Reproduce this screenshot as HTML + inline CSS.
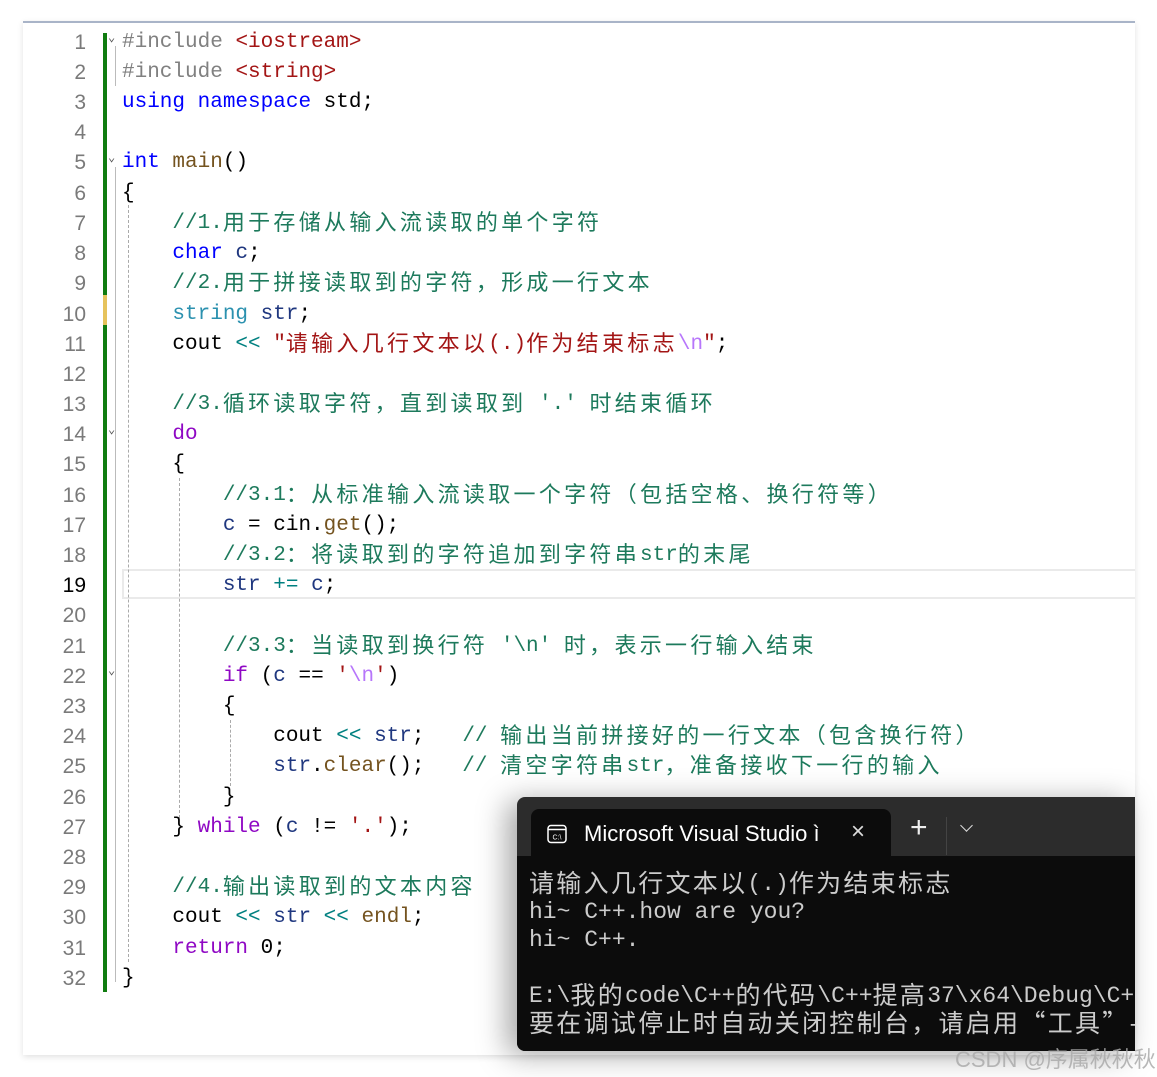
<!DOCTYPE html>
<html><head><meta charset="utf-8"><style>
*{margin:0;padding:0;box-sizing:border-box}
body{width:1157px;height:1077px;background:#fff;position:relative;overflow:hidden;font-family:"Liberation Mono","Noto Sans CJK SC",monospace}
#ed{position:absolute;left:23px;top:21px;width:1112px;height:1034px;background:#fff;border-top:2px solid #a9b4c8;box-shadow:0 2px 6px rgba(0,0,0,.12)}
.ln{position:absolute;left:40px;width:46px;text-align:right;font-family:"Liberation Sans",sans-serif;font-size:21px;color:#7a7a7a;height:30px;line-height:30px}
.cl{position:absolute;left:122px;white-space:pre;font-size:21px;line-height:30px;height:30px;color:#000}
.c{font-family:"Noto Sans CJK SC",sans-serif;font-size:22px;letter-spacing:3.3px;line-height:0;position:relative;top:2px}
.k{color:#0000ff}.p{color:#808080}.s{color:#a31515}.f{color:#74531f}.v{color:#1f377f}.t{color:#2b91af}.o{color:#008080}.m{color:#8f08c4}.e{color:#b776fb}.g{color:#1d7a5c}
.gl{position:absolute;border-left:1px dashed #aaa;width:0}
#bar{position:absolute;left:103px;top:33px;width:4px;height:959px;background:#107c10}
#term{position:absolute;left:517px;top:797px;width:618px;height:254px;background:#2c2c2c;border-radius:8px 0 0 8px;box-shadow:-10px 4px 30px rgba(0,0,0,.35);overflow:hidden}
#tab{position:absolute;left:14px;top:12px;width:360px;height:50px;background:#0c0c0c;border-radius:8px 8px 0 0;color:#fff;font-family:"Liberation Sans",sans-serif;font-size:22px}
#tb{position:absolute;left:0;top:59px;width:618px;height:200px;background:#0c0c0c;color:#cccccc;font-size:23px;line-height:28px;padding:14px 0 0 12px;white-space:pre}
#tb .c{font-size:25px;letter-spacing:2.3px;line-height:0;top:2px}
</style></head><body>
<div id="ed"></div>
<div id="bar"></div>
<div style="position:absolute;left:103px;top:295px;width:4px;height:30px;background:#e6c35c"></div>
<div style="position:absolute;left:122px;top:569px;width:1013px;height:30px;border:2px solid #eaeaea;border-right:none"></div>
<div class="gl" style="left:115px;top:46px;height:40px;border-left:1px solid #bbb"></div>
<div class="gl" style="left:115px;top:167px;height:815px;border-left:1px solid #bbb"></div>
<div class="gl" style="left:128px;top:205px;height:757px"></div>
<div class="gl" style="left:179px;top:478px;height:340px"></div>
<div class="gl" style="left:230px;top:720px;height:66px"></div>
<div style="position:absolute;left:108px;top:30px;font-size:12px;color:#555">&#8964;</div>
<div style="position:absolute;left:108px;top:150px;font-size:12px;color:#555">&#8964;</div>
<div style="position:absolute;left:108px;top:422px;font-size:12px;color:#555">&#8964;</div>
<div style="position:absolute;left:108px;top:663px;font-size:12px;color:#555">&#8964;</div>

<div style="position:absolute;left:0;top:2px;width:1157px;height:1000px">
<div class="ln" style="top:26px">1</div><div class="ln" style="top:56px">2</div><div class="ln" style="top:86px">3</div><div class="ln" style="top:116px">4</div><div class="ln" style="top:146px">5</div><div class="ln" style="top:177px">6</div><div class="ln" style="top:207px">7</div><div class="ln" style="top:237px">8</div><div class="ln" style="top:267px">9</div><div class="ln" style="top:298px">10</div><div class="ln" style="top:328px">11</div><div class="ln" style="top:358px">12</div><div class="ln" style="top:388px">13</div><div class="ln" style="top:418px">14</div><div class="ln" style="top:448px">15</div><div class="ln" style="top:479px">16</div><div class="ln" style="top:509px">17</div><div class="ln" style="top:539px">18</div><div class="ln" style="top:569px;color:#000">19</div><div class="ln" style="top:599px">20</div><div class="ln" style="top:630px">21</div><div class="ln" style="top:660px">22</div><div class="ln" style="top:690px">23</div><div class="ln" style="top:720px">24</div><div class="ln" style="top:750px">25</div><div class="ln" style="top:781px">26</div><div class="ln" style="top:811px">27</div><div class="ln" style="top:841px">28</div><div class="ln" style="top:871px">29</div><div class="ln" style="top:901px">30</div><div class="ln" style="top:932px">31</div><div class="ln" style="top:962px">32</div>

<div class="cl" style="top:26px"><span class="p">#include</span> <span class="s">&lt;iostream&gt;</span></div>
<div class="cl" style="top:56px"><span class="p">#include</span> <span class="s">&lt;string&gt;</span></div>
<div class="cl" style="top:86px"><span class="k">using</span> <span class="k">namespace</span> std;</div>
<div class="cl" style="top:146px"><span class="k">int</span> <span class="f">main</span>()</div>
<div class="cl" style="top:177px">{</div>
<div class="cl g" style="top:207px">    //1.<span class="c">用于存储从输入流读取的单个字符</span></div>
<div class="cl" style="top:237px">    <span class="k">char</span> <span class="v">c</span>;</div>
<div class="cl g" style="top:267px">    //2.<span class="c">用于拼接读取到的字符，形成一行文本</span></div>
<div class="cl" style="top:298px">    <span class="t">string</span> <span class="v">str</span>;</div>
<div class="cl" style="top:328px">    cout <span class="o">&lt;&lt;</span> <span class="s">"<span class="c">请输入几行文本以</span>(.)<span class="c">作为结束标志</span></span><span class="e">\n</span><span class="s">"</span>;</div>
<div class="cl g" style="top:388px">    //3.<span class="c">循环读取字符，直到读取到</span> '.' <span class="c">时结束循环</span></div>
<div class="cl m" style="top:418px">    do</div>
<div class="cl" style="top:448px">    {</div>
<div class="cl g" style="top:479px">        //3.1<span class="c">：从标准输入流读取一个字符（包括空格、换行符等）</span></div>
<div class="cl" style="top:509px">        <span class="v">c</span> = cin.<span class="f">get</span>();</div>
<div class="cl g" style="top:539px">        //3.2<span class="c">：将读取到的字符追加到字符串</span>str<span class="c">的末尾</span></div>
<div class="cl" style="top:569px">        <span class="v">str</span> <span class="o">+=</span> <span class="v">c</span>;</div>
<div class="cl g" style="top:630px">        //3.3<span class="c">：当读取到换行符</span> '\n' <span class="c">时，表示一行输入结束</span></div>
<div class="cl" style="top:660px">        <span class="m">if</span> (<span class="v">c</span> == <span class="s">'</span><span class="e">\n</span><span class="s">'</span>)</div>
<div class="cl" style="top:690px">        {</div>
<div class="cl" style="top:720px">            cout <span class="o">&lt;&lt;</span> <span class="v">str</span>;   <span class="g">// <span class="c">输出当前拼接好的一行文本（包含换行符）</span></span></div>
<div class="cl" style="top:750px">            <span class="v">str</span>.<span class="f">clear</span>();   <span class="g">// <span class="c">清空字符串</span>str<span class="c">，准备接收下一行的输入</span></span></div>
<div class="cl" style="top:781px">        }</div>
<div class="cl" style="top:811px">    } <span class="m">while</span> (<span class="v">c</span> != <span class="s">'.'</span>);</div>
<div class="cl g" style="top:871px">    //4.<span class="c">输出读取到的文本内容</span></div>
<div class="cl" style="top:901px">    cout <span class="o">&lt;&lt;</span> <span class="v">str</span> <span class="o">&lt;&lt;</span> <span class="f">endl</span>;</div>
<div class="cl" style="top:932px">    <span class="m">return</span> 0;</div>
<div class="cl" style="top:962px">}</div>
</div>

<div id="term">
<div id="tab">
<svg style="position:absolute;left:16px;top:15px" width="20" height="20" viewBox="0 0 20 20"><rect x="1" y="1.5" width="18" height="17" rx="3" fill="none" stroke="#fff" stroke-width="1.5"/><line x1="1" y1="5.5" x2="19" y2="5.5" stroke="#fff" stroke-width="1.5"/><text x="10" y="15.5" font-size="7" fill="#fff" text-anchor="middle" font-family="Liberation Sans">C:\</text></svg>
<div style="position:absolute;left:53px;top:12px;white-space:nowrap">Microsoft Visual Studio ì</div>
<div style="position:absolute;left:320px;top:9px;font-size:24px;color:#ddd">×</div>
</div>
<div style="position:absolute;left:393px;top:16px;color:#eee;font-size:30px;font-family:'Liberation Sans';line-height:30px">+</div>
<div style="position:absolute;left:429px;top:20px;width:1px;height:38px;background:#444"></div>
<div style="position:absolute;left:445px;top:24px;width:9px;height:9px;border-right:1.5px solid #ddd;border-bottom:1.5px solid #ddd;transform:rotate(45deg)"></div>
<div id="tb"><span class="c">请输入几行文本以</span>(.)<span class="c">作为结束标志</span>
hi~ C++.how are you?
hi~ C++.

E:\<span class="c">我的</span>code\C++<span class="c">的代码</span>\C++<span class="c">提高</span>37\x64\Debug\C++
<span class="c">要在调试停止时自动关闭控制台，请启用“工具”-&gt;</span></div>
</div>
<div style="position:absolute;left:955px;top:1042px;font-family:'Liberation Sans','Noto Sans CJK SC',sans-serif;font-size:22px;color:rgba(170,170,170,.85);white-space:nowrap">CSDN @序属秋秋秋</div>
</body></html>
